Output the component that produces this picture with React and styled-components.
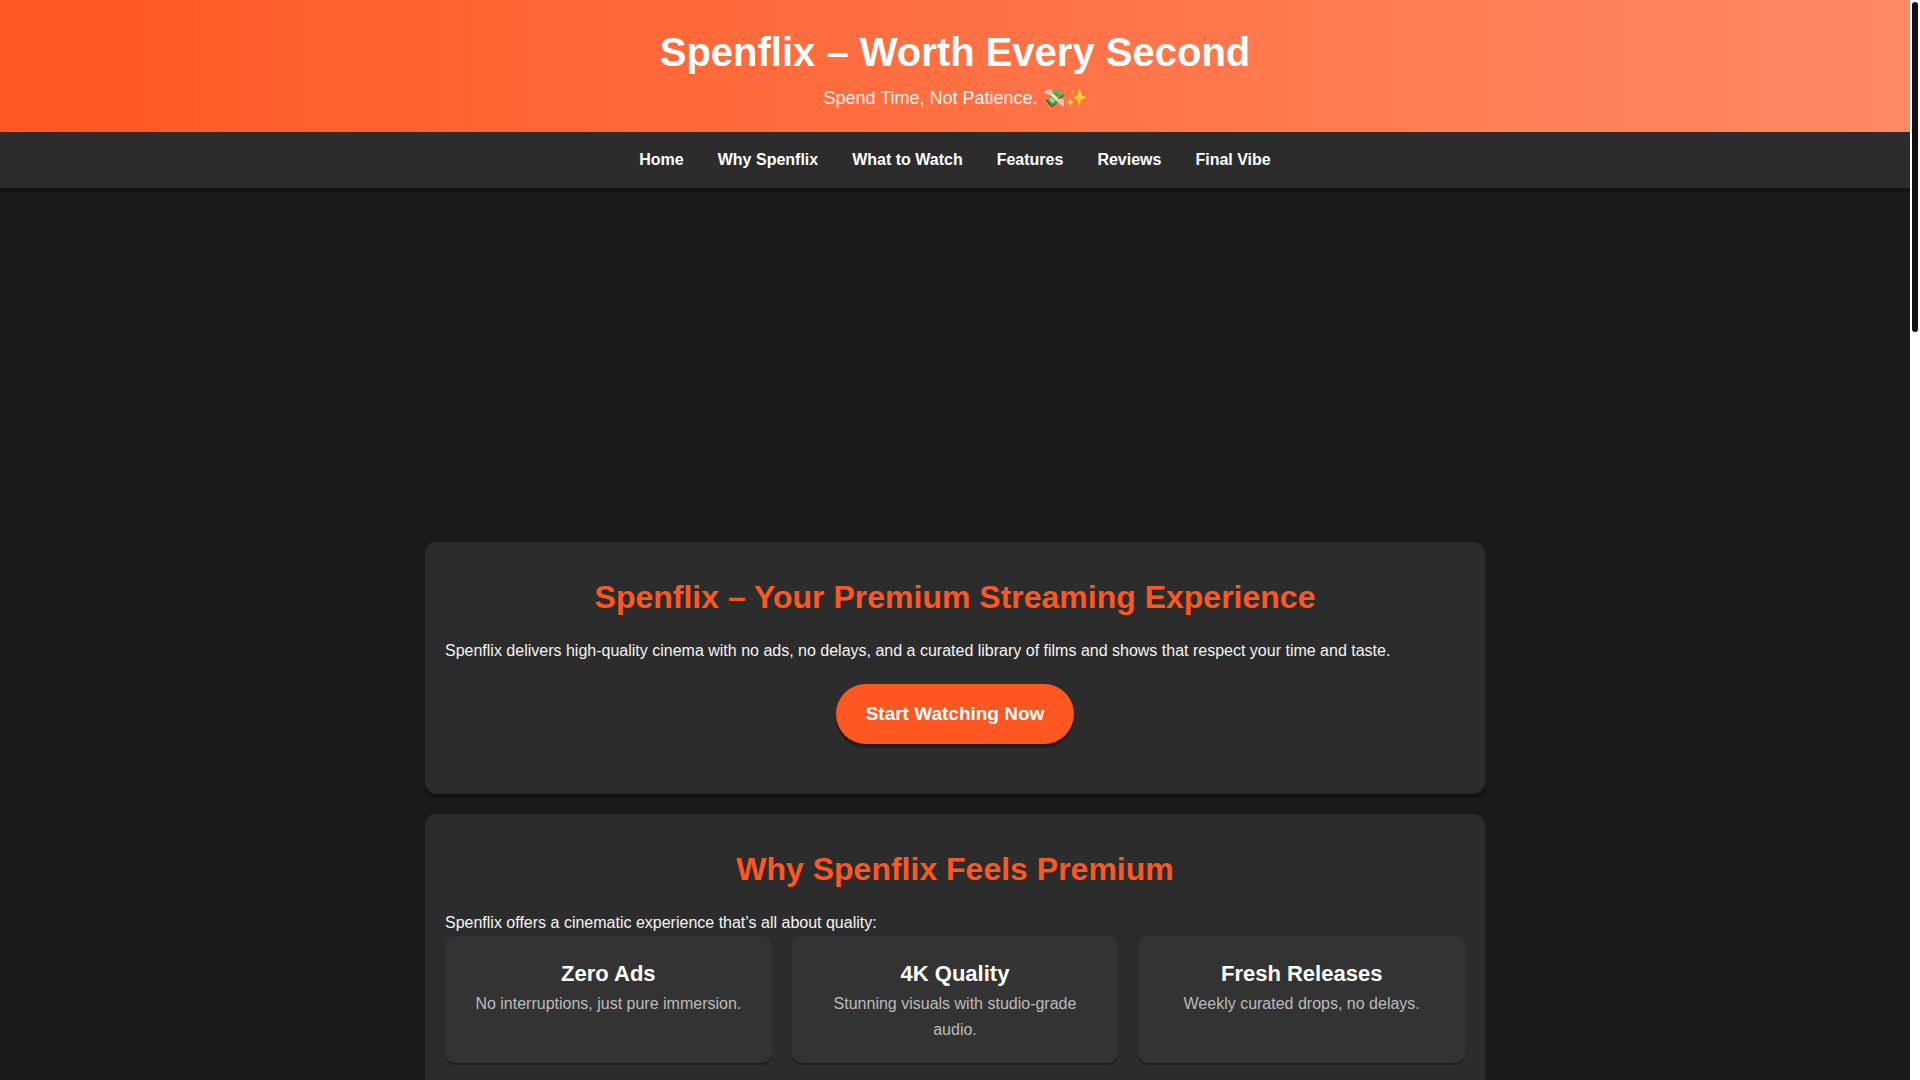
import styled, { createGlobalStyle } from "styled-components";

const Theme = {
    colors: {
        brand: "#ff5722",
        brandLight: "#ff8a65",
        page: "#1a1a1a",
        surface: "#2c2c2c",
        raised: "#333",
        text: "#f5f5f5",
        muted: "#bbb",
        white: "#fff",
    },
    font: `"Liberation Sans", Arial, sans-serif`,
};

const GlobalStyle = createGlobalStyle`
    * {
        box-sizing: border-box;
        margin: 0;
        padding: 0;
    }
    body {
        background: ${Theme.colors.page};
        color: ${Theme.colors.text};
        font-family: ${Theme.font};
        font-size: 16px;
        line-height: 26px;
    }
`;

const Shell = styled.div`
    display: grid;
    grid-template-columns: 1fr 10px;
    height: 100vh;
`;

const ScrollArea = styled.div`
    overflow-y: auto;
    scrollbar-width: none;
`;

const ScrollTrack = styled.div`
    background: ${Theme.colors.white};
    padding: 2px;
`;

const ScrollThumb = styled.div`
    height: 330px;
    border-radius: 3px;
    background: #111;
`;

const Header = styled.header`
    padding: 20px;
    text-align: center;
    color: ${Theme.colors.white};
    background: linear-gradient(to right, ${Theme.colors.brand}, ${Theme.colors.brandLight});

    & h1 {
        font-size: 40px;
        line-height: 64px;
    }
    & p {
        font-size: 18px;
        line-height: 28px;
        opacity: 0.9;
    }
`;

const Nav = styled.nav`
    display: flex;
    flex-wrap: wrap;
    justify-content: center;
    column-gap: 34px;
    padding: 15px;
    background: ${Theme.colors.surface};
    box-shadow: 0 4px 0 rgba(0,0,0,0.3);

    & a {
        color: ${Theme.colors.white};
        font-weight: bold;
        text-decoration: none;
    }
`;

const Hero = styled.div`
    height: 334px;
`;

const Main = styled.main`
    display: grid;
    gap: 20px;
    max-width: 1100px;
    margin: 0 auto;
    padding: 20px;
`;

const Section = styled.section`
    padding: 30px 20px;
    border-radius: 12px;
    background: ${Theme.colors.surface};
    box-shadow: 0 4px 0 rgba(0,0,0,0.3);

    & h2 {
        margin-bottom: 15px;
        color: ${Theme.colors.brand};
        font-size: 32px;
        line-height: 51px;
        text-align: center;
    }
`;

const CtaButton = styled.button`
    display: block;
    margin: 20px auto;
    padding: 15px 30px;
    border: none;
    border-radius: 30px;
    background: ${Theme.colors.brand};
    box-shadow: 0 4px 0 rgba(0,0,0,0.3);
    color: ${Theme.colors.white};
    font-family: inherit;
    font-size: 19px;
    font-weight: bold;
    line-height: 30px;
    cursor: pointer;
`;

const FeatureGrid = styled.div`
    display: grid;
    grid-template-columns: repeat(auto-fit, minmax(250px, 1fr));
    gap: 20px;
`;

const Feature = styled.article`
    padding: 20px;
    border-radius: 10px;
    background: ${Theme.colors.raised};
    box-shadow: 0 2px 0 rgba(0,0,0,0.3);
    text-align: center;

    & h3 {
        color: ${Theme.colors.white};
        font-size: 22px;
        line-height: 35px;
    }
    & p {
        color: ${Theme.colors.muted};
    }
`;

const links = [
    { id: "home", label: "Home" },
    { id: "why", label: "Why Spenflix" },
    { id: "watch", label: "What to Watch" },
    { id: "features", label: "Features" },
    { id: "reviews", label: "Reviews" },
    { id: "final", label: "Final Vibe" },
];

const features = [
    { title: "Zero Ads", text: "No interruptions, just pure immersion." },
    { title: "4K Quality", text: "Stunning visuals with studio-grade audio." },
    { title: "Fresh Releases", text: "Weekly curated drops, no delays." },
];

const App = () => {
    return <>
        <GlobalStyle />
        <Shell>
            <ScrollArea>
                <Header>
                    <h1>Spenflix – Worth Every Second</h1>
                    <p>Spend Time, Not Patience. 💸✨</p>
                </Header>
                <Nav>
                    {links.map(link => <a key={link.id} href={`#${link.id}`}>{link.label}</a>)}
                </Nav>
                <Hero />
                <Main>
                    <Section id="home">
                        <h2>Spenflix – Your Premium Streaming Experience</h2>
                        <p>Spenflix delivers high-quality cinema with no ads, no delays, and a curated library of films and shows that respect your time and taste.</p>
                        <CtaButton type="button">Start Watching Now</CtaButton>
                    </Section>
                    <Section id="why">
                        <h2>Why Spenflix Feels Premium</h2>
                        <p>Spenflix offers a cinematic experience that’s all about quality:</p>
                        <FeatureGrid>
                            {features.map(({ title, text }) => <Feature key={title}>
                                <h3>{title}</h3>
                                <p>{text}</p>
                            </Feature>)}
                        </FeatureGrid>
                    </Section>
                </Main>
            </ScrollArea>
            <ScrollTrack>
                <ScrollThumb />
            </ScrollTrack>
        </Shell>
    </>
}

export default App;
